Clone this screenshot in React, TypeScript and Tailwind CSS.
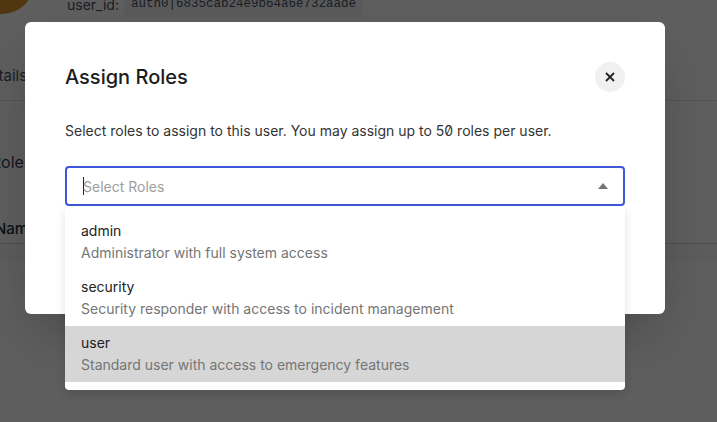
import { useState } from "react";

type Role = {
  name: string;
  description: string;
};

const roles: Role[] = [
  { name: "admin", description: "Administrator with full system access" },
  { name: "security", description: "Security responder with access to incident management" },
  { name: "user", description: "Standard user with access to emergency features" },
];

function PageBehind() {
  return (
    <div className="flex h-full w-full flex-col bg-white font-['Inter',sans-serif] text-gray-800">
      <div className="-mt-[8px] flex h-[25px] items-center">
        <div className="-ml-[30px] mt-[-46px] h-[64px] w-[64px] shrink-0 rounded-full bg-[#d9952a]" />
        <span className="ml-[33px] text-[14px] text-gray-600">user_id:</span>
        <span className="ml-[5px] rounded bg-gray-100 px-[7px] py-[3px] font-['Liberation_Mono',monospace] text-[12.5px] text-gray-600">
          auth0|6835cab24e9b64a6e732aade
        </span>
      </div>
      <div className="mt-[45px] flex h-[39px] items-center border-b border-gray-200 pb-[10px]">
        <span className="-ml-[21px] text-[15px] text-gray-600">Details</span>
      </div>
      <div className="mt-[49px] -ml-[9px] text-[16px] text-gray-700">Roles</div>
      <div className="mt-[42px] -ml-[5px] flex h-[28px] items-center border-b border-gray-300 text-[15px] font-medium text-gray-800">
        Name
      </div>
      <div className="h-[18px] bg-[#fafafa]" />
    </div>
  );
}

export default function App() {
  const [active] = useState("user");

  return (
    <div className="relative h-[422px] w-[717px] overflow-hidden font-['Inter',sans-serif]">
      <PageBehind />

      <div className="absolute inset-0 bg-black/[0.63]">
        <div className="pl-[25px] pt-[22px]">
          <div className="relative h-[292px] w-[640px] rounded-md bg-white px-10 pt-10 shadow-2xl">
            <div className="flex items-center justify-between">
              <h2 className="text-[20px] font-medium leading-7 text-[#1c1c1c]">Assign Roles</h2>
              <button
                type="button"
                className="flex h-[30px] w-[30px] items-center justify-center rounded-full bg-[#f0f0f0] text-[#222]"
              >
                <svg className="h-[10px] w-[10px]" viewBox="0 0 10 10" fill="none" stroke="currentColor" strokeWidth={1.8}>
                  <path d="M1 1l8 8M9 1l-8 8" />
                </svg>
              </button>
            </div>

            <p className="mt-[29px] text-[14px] leading-5 text-[#333] [font-feature-settings:'zero']">
              Select roles to assign to this user. You may assign up to 50 roles per user.
            </p>

            <div className="relative mt-[25px]">
              <div className="flex h-10 items-center rounded border-2 border-[#3f58d9] pl-4 pr-[15px]">
                <span className="h-[18px] w-px bg-[#222]" />
                <span className="-ml-px flex-1 text-[14px] text-[#9e9e9e]">Select Roles</span>
                <svg className="h-[6px] w-[10px]" viewBox="0 0 10 6" fill="#757575">
                  <path d="M0 6L5 0l5 6z" />
                </svg>
              </div>

              <div className="absolute left-0 right-0 top-10 z-10 rounded-b bg-white py-2 shadow-[0_4px_10px_rgba(0,0,0,0.12)]">
                {roles.map((role) => (
                  <div
                    key={role.name}
                    className={`px-4 py-[7px] ${role.name === active ? "bg-[#d6d6d6]" : ""}`}
                  >
                    <div className="text-[14px] leading-5 text-[#222]">{role.name}</div>
                    <div className="mt-[2px] text-[14px] leading-5 text-[#757575]">{role.description}</div>
                  </div>
                ))}
              </div>
            </div>
          </div>
        </div>
      </div>
    </div>
  );
}
